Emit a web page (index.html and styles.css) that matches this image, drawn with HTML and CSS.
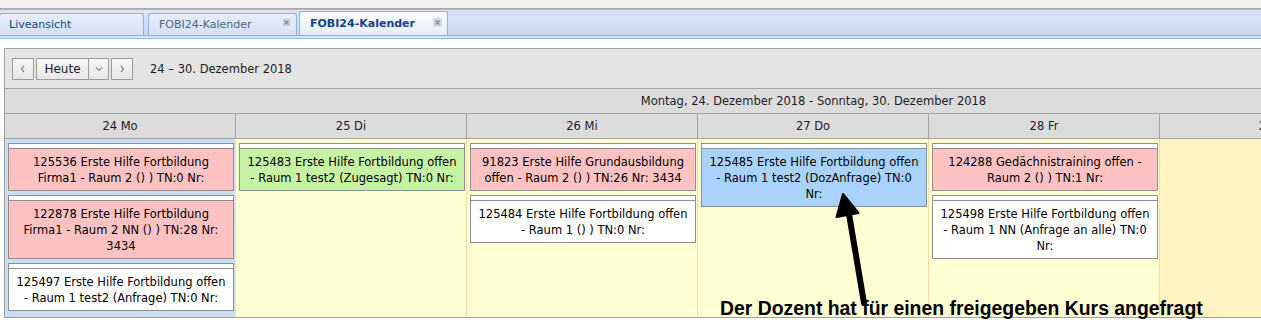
FILE: index.html
```html
<!DOCTYPE html>
<html lang="de">

<head>
  <meta charset="utf-8">
  <title>FOBI24-Kalender</title>
  <link rel="stylesheet" href="styles.css">
</head>

<body>
  <div class="top-strip"></div>

  <!-- Tabs -->
  <div class="tabbar">
    <div class="tab tab-first">Liveansicht</div>
    <div class="tab">
      <span>FOBI24-Kalender</span>
      <svg class="tab-close" width="11" height="11" viewBox="0 0 11 11">
        <rect x="0.5" y="0.5" width="10" height="10" rx="2" fill="#d2dae6" stroke="#f4f7fb" />
        <path d="M3.5 3.5l4 4M7.5 3.5l-4 4" stroke="#8791a0" stroke-width="1.6" />
      </svg>
    </div>
    <div class="tab tab-active">
      <span>FOBI24-Kalender</span>
      <svg class="tab-close" width="11" height="11" viewBox="0 0 11 11">
        <rect x="0.5" y="0.5" width="10" height="10" rx="2" fill="#d2dae6" stroke="#f4f7fb" />
        <path d="M3.5 3.5l4 4M7.5 3.5l-4 4" stroke="#8791a0" stroke-width="1.6" />
      </svg>
    </div>
  </div>
  <div class="tab-spacer"></div>
  <div class="tab-gap"></div>

  <div class="panel">
    <!-- Toolbar -->
    <div class="toolbar">
      <button class="btn btn-icon">
        <svg width="6" height="8" viewBox="0 0 6 8"><path d="M4 1L1.5 4L4 7" fill="none" stroke="#8a8a8a" stroke-width="1.2" /></svg>
      </button>
      <div class="btn-group">
        <button class="btn btn-today">Heute</button>
        <button class="btn btn-drop">
          <svg width="8" height="6" viewBox="0 0 8 6"><path d="M1 1.5L4 4.5L7 1.5" fill="none" stroke="#8a8a8a" stroke-width="1.2" /></svg>
        </button>
      </div>
      <button class="btn btn-icon">
        <svg width="6" height="8" viewBox="0 0 6 8"><path d="M2 1L4.5 4L2 7" fill="none" stroke="#8a8a8a" stroke-width="1.2" /></svg>
      </button>
      <span class="range-label">24 – 30. Dezember 2018</span>
    </div>

    <!-- Calendar week -->
    <div class="calendar">
      <div class="range-row">Montag, 24. Dezember 2018 - Sonntag, 30. Dezember 2018</div>
      <div class="day-heads">
        <div class="day-head">24 Mo</div>
        <div class="day-head">25 Di</div>
        <div class="day-head">26 Mi</div>
        <div class="day-head">27 Do</div>
        <div class="day-head">28 Fr</div>
        <div class="day-head">29 Sa</div>
        <div class="day-head">30 So</div>
      </div>
      <div class="day-cols">
        <div class="day-col day-today">
          <div class="event ev-pink">
            <div class="ev-head"></div>
            <div class="ev-body">125536 Erste Hilfe Fortbildung<br>Firma1 - Raum 2 () ) TN:0 Nr:</div>
          </div>
          <div class="event ev-pink">
            <div class="ev-head"></div>
            <div class="ev-body">122878 Erste Hilfe Fortbildung<br>Firma1 - Raum 2 NN () ) TN:28 Nr:<br>3434</div>
          </div>
          <div class="event ev-white">
            <div class="ev-head"></div>
            <div class="ev-body">125497 Erste Hilfe Fortbildung offen<br>- Raum 1 test2 (Anfrage) TN:0 Nr:</div>
          </div>
        </div>
        <div class="day-col">
          <div class="event ev-green">
            <div class="ev-head"></div>
            <div class="ev-body">125483 Erste Hilfe Fortbildung offen<br>- Raum 1 test2 (Zugesagt) TN:0 Nr:</div>
          </div>
        </div>
        <div class="day-col">
          <div class="event ev-pink">
            <div class="ev-head"></div>
            <div class="ev-body">91823 Erste Hilfe Grundausbildung<br>offen - Raum 2 () ) TN:26 Nr: 3434</div>
          </div>
          <div class="event ev-white">
            <div class="ev-head"></div>
            <div class="ev-body">125484 Erste Hilfe Fortbildung offen<br>- Raum 1 () ) TN:0 Nr:</div>
          </div>
        </div>
        <div class="day-col">
          <div class="event ev-blue">
            <div class="ev-head"></div>
            <div class="ev-body">125485 Erste Hilfe Fortbildung offen<br>- Raum 1 test2 (DozAnfrage) TN:0<br>Nr:</div>
          </div>
        </div>
        <div class="day-col">
          <div class="event ev-pink">
            <div class="ev-head"></div>
            <div class="ev-body">124288 Gedächnistraining offen -<br>Raum 2 () ) TN:1 Nr:</div>
          </div>
          <div class="event ev-white">
            <div class="ev-head"></div>
            <div class="ev-body">125498 Erste Hilfe Fortbildung offen<br>- Raum 1 NN (Anfrage an alle) TN:0<br>Nr:</div>
          </div>
        </div>
        <div class="day-col day-weekend"></div>
        <div class="day-col day-weekend"></div>
      </div>
    </div>
  </div>

  <!-- annotation drawn over the calendar -->
  <svg class="annot-arrow" width="44" height="130" viewBox="0 0 44 130">
    <path d="M19 29L34 118" stroke="#000" stroke-width="6" stroke-linecap="round" />
    <polygon points="13,9 6.5,32 28.5,28" fill="#000" stroke="#000" stroke-width="2" stroke-linejoin="round" />
  </svg>
  <div class="annot-text">Der Dozent hat für einen freigegeben Kurs angefragt</div>
</body>

</html>
```

FILE: styles.css
```css
body {
  margin: 0;
  width: 1261px;
  height: 328px;
  overflow: hidden;
  position: relative;
  background: #fff;
  font-family: "DejaVu Sans", Verdana, sans-serif;
  font-size: 11px;
}

.top-strip {
  height: 8px;
  background: #f2f2f2;
  border-bottom: 1px solid #a8a8a8;
}

/* tabs */
.tabbar {
  height: 25px;
  display: flex;
  align-items: flex-end;
  border-top: 1px solid #99bbe8;
  border-bottom: 1px solid #8db2e3;
  background: linear-gradient(#dae6f6, #c7d9f0);
}

.tab {
  box-sizing: border-box;
  width: 149px;
  height: 22px;
  margin-left: 2px;
  padding-left: 10px;
  display: flex;
  align-items: center;
  border: 1px solid #8db2e3;
  border-bottom: none;
  border-radius: 3px 3px 0 0;
  background: linear-gradient(#e6eef9, #d3e1f4);
  color: #4d6386;
}

.tab-first {
  width: 145px;
  margin-left: -1px;
  margin-right: 2px;
  padding-left: 9px;
  color: #15428b;
}

.tab-active {
  height: 24px;
  font-weight: bold;
  color: #15428b;
  background: linear-gradient(#fdfeff, #e2ecf9);
}

.tab-close {
  margin-left: auto;
  margin-right: 4px;
  align-self: flex-start;
  margin-top: 3px;
}

.tab-active .tab-close {
  margin-top: 5px;
}

.tab-spacer {
  height: 2px;
  background: #d6e4f6;
  border-bottom: 1px solid #99bbe8;
}

.tab-gap {
  height: 9px;
  background: #fff;
}

/* panel */
.panel {
  margin-left: 4px;
  border-left: 1px solid #a0a0a0;
  border-top: 1px solid #a0a0a0;
  border-bottom: 1px solid #a0a0a0;
  background: #e4e4e4;
  overflow: hidden;
  font-size: 11.5px;
  color: #1c1c1c;
}

.toolbar {
  height: 39px;
  display: flex;
  align-items: center;
  padding-left: 7px;
  border-bottom: 1px solid #a3a3a3;
}

.btn {
  box-sizing: border-box;
  height: 22px;
  margin: 0;
  padding: 0;
  border: 1px solid #9c9c9c;
  background: linear-gradient(#f8f8f8, #e6e6e6);
  font-family: inherit;
  font-size: 12px;
  color: #1c1c1c;
  display: flex;
  align-items: center;
  justify-content: center;
}

.btn-icon {
  width: 22px;
}

.btn-group {
  display: flex;
  margin: 0 2px;
}

.btn-today {
  width: 53px;
}

.btn-drop {
  width: 20px;
  border-left: none;
}

.range-label {
  margin-left: 17px;
}

.calendar {
  width: 1617px;
}

.range-row {
  height: 24px;
  line-height: 24px;
  text-align: center;
  background: #dcdcdc;
  border-bottom: 1px solid #a3a3a3;
}

.day-heads,
.day-cols {
  display: grid;
  grid-template-columns: repeat(7, 231px);
}

.day-head {
  height: 24px;
  line-height: 24px;
  text-align: center;
  background: #dcdcdc;
  border-right: 1px solid #a3a3a3;
  border-bottom: 1px solid #a3a3a3;
}

.day-col {
  height: 174px;
  overflow: hidden;
  padding: 4px 1px 0 3px;
  display: flex;
  flex-direction: column;
  gap: 4px;
  background: #ffffd4;
  border-right: 1px solid #f3dba9;
}

.day-today {
  background: #cbddf1;
  border-right-color: #e9e7d4;
}

.day-weekend {
  background: #fff3c2;
}

/* events */
.event {
  flex-shrink: 0;
  border: 1px solid #8f8f8f;
  color: #000;
}

.ev-head {
  height: 4px;
  background: #fff;
  border-bottom: 1px solid #8f8f8f;
}

.ev-body {
  padding: 5px 1px 4px;
  line-height: 16px;
  text-align: center;
  white-space: nowrap;
}

.ev-pink {
  background: #ffc2c2;
}

.ev-green {
  background: #c6f2a4;
}

.ev-blue {
  background: #a9d3fc;
}

.ev-white {
  background: #fff;
}

/* annotation over the calendar */
.annot-arrow {
  position: absolute;
  left: 830px;
  top: 185px;
}

.annot-text {
  position: absolute;
  left: 720px;
  top: 297px;
  font-family: "Liberation Sans", Arial, sans-serif;
  font-weight: bold;
  font-size: 19.4px;
  line-height: 22px;
  color: #000;
  white-space: nowrap;
}
```
